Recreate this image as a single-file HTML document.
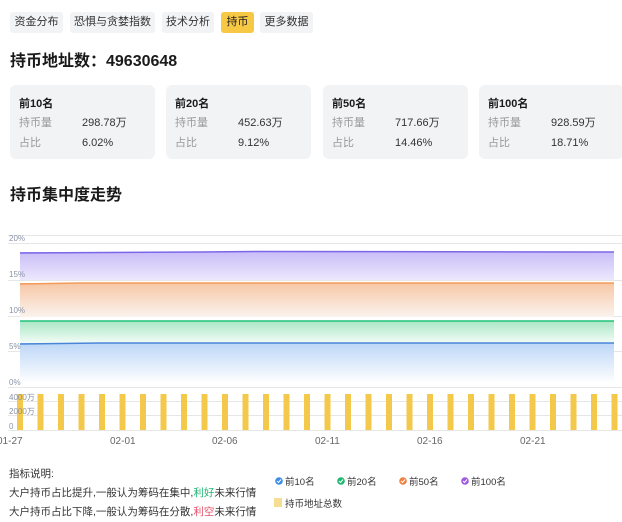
<!DOCTYPE html>
<html><head><meta charset="utf-8"><style>
*{margin:0;padding:0;box-sizing:border-box}
body{width:622px;height:522px;overflow:hidden;background:#fff;font-family:"Liberation Sans","Noto Sans CJK SC",sans-serif;color:#1a1a1a;position:relative}
.tab{position:absolute;top:12px;height:21px;background:#f2f3f5;border-radius:3px;font-size:11px;line-height:21px;text-align:center;color:#333}
.tab.on{background:#f7c843;color:#222}
.h{position:absolute;left:10px;font-size:16px;font-weight:bold}
.card{position:absolute;top:85px;width:145px;height:74px;background:#f2f3f5;border-radius:6px;font-size:11px}
.card b{position:absolute;left:9px;top:10px;font-size:11px}
.card .l{position:absolute;left:9px;color:#999;line-height:14px}
.card .v{position:absolute;left:72px;color:#333;line-height:14px}
.t{position:absolute;font-size:10.5px;color:#333}
</style></head><body>
<div class="tab" style="left:10px;width:53px">资金分布</div>
<div class="tab" style="left:70px;width:85px">恐惧与贪婪指数</div>
<div class="tab" style="left:162px;width:52px">技术分析</div>
<div class="tab on" style="left:221px;width:33px">持币</div>
<div class="tab" style="left:260px;width:53px">更多数据</div>
<div class="h" style="top:47px">持币地址数：49630648</div>
<div class="card" style="left:10px"><b>前10名</b><span class="l" style="top:31px">持币量</span><span class="v" style="top:31px">298.78万</span><span class="l" style="top:51px">占比</span><span class="v" style="top:51px">6.02%</span></div>
<div class="card" style="left:166px"><b>前20名</b><span class="l" style="top:31px">持币量</span><span class="v" style="top:31px">452.63万</span><span class="l" style="top:51px">占比</span><span class="v" style="top:51px">9.12%</span></div>
<div class="card" style="left:323px"><b>前50名</b><span class="l" style="top:31px">持币量</span><span class="v" style="top:31px">717.66万</span><span class="l" style="top:51px">占比</span><span class="v" style="top:51px">14.46%</span></div>
<div class="card" style="left:479px"><b>前100名</b><span class="l" style="top:31px">持币量</span><span class="v" style="top:31px">928.59万</span><span class="l" style="top:51px">占比</span><span class="v" style="top:51px">18.71%</span></div>
<div class="h" style="top:181px">持币集中度走势</div>
<svg style="position:absolute;left:0;top:0" width="622" height="522">
<defs>
<linearGradient id="gp" x1="0" y1="0" x2="0" y2="1"><stop offset="0" stop-color="#c9bdf7"/><stop offset="1" stop-color="#ece8fd"/></linearGradient>
<linearGradient id="go" x1="0" y1="0" x2="0" y2="1"><stop offset="0" stop-color="#f6c7a6"/><stop offset="1" stop-color="#fbf3ee"/></linearGradient>
<linearGradient id="gg" x1="0" y1="0" x2="0" y2="1"><stop offset="0" stop-color="#a9e7c5"/><stop offset="1" stop-color="#f3fcf7"/></linearGradient>
<linearGradient id="gb" x1="0" y1="0" x2="0" y2="1"><stop offset="0" stop-color="#bcd6f7"/><stop offset="1" stop-color="#ffffff"/></linearGradient>
</defs>
<g stroke="#e6e6e6" stroke-width="1">
<line x1="8" y1="235.5" x2="622" y2="235.5"/><line x1="8" y1="243.5" x2="622" y2="243.5"/>
<line x1="8" y1="280.5" x2="622" y2="280.5"/><line x1="8" y1="316.5" x2="622" y2="316.5"/>
<line x1="8" y1="351.5" x2="622" y2="351.5"/><line x1="8" y1="387.5" x2="622" y2="387.5"/>
<line x1="8" y1="401.5" x2="622" y2="401.5"/><line x1="8" y1="415.5" x2="622" y2="415.5"/><line x1="8" y1="430.5" x2="622" y2="430.5"/>
</g>
<rect x="20" y="252" width="594" height="28" fill="url(#gp)"/>
<rect x="20" y="283" width="594" height="34" fill="url(#go)"/>
<rect x="20" y="321" width="594" height="22" fill="url(#gg)"/>
<rect x="20" y="343" width="594" height="40" fill="url(#gb)"/>
<path d="M20 253 L200 252 L260 251.5 L614 252" stroke="#7b68e8" stroke-width="1.5" fill="none"/>
<path d="M20 284 L80 283 L614 283" stroke="#f39a5a" stroke-width="1.5" fill="none"/>
<path d="M20 321 L614 321" stroke="#22c27a" stroke-width="1.5" fill="none"/>
<path d="M20 344 L100 343 L614 343" stroke="#4a86d8" stroke-width="1.5" fill="none"/>
<g fill="#f4c84a" id="bars"></g>
<g font-size="8" fill="#8a94a6" font-family="Liberation Sans,Noto Sans CJK SC,sans-serif">
<text x="9" y="241">20%</text><text x="9" y="277">15%</text><text x="9" y="313">10%</text><text x="9" y="349">5%</text><text x="9" y="385">0%</text>
<text x="9" y="400">4000万</text><text x="9" y="414">2000万</text><text x="9" y="429">0</text>
</g>
<g font-size="10" fill="#666" font-family="Liberation Sans,sans-serif">
<text x="-3" y="444">01-27</text><text x="110" y="444">02-01</text><text x="212" y="444">02-06</text><text x="315" y="444">02-11</text><text x="417" y="444">02-16</text><text x="520" y="444">02-21</text>
</g>
<circle cx="279" cy="481" r="3.8" fill="#3a8ee6"/><circle cx="341" cy="481" r="3.8" fill="#1fb872"/><circle cx="403" cy="481" r="3.8" fill="#f08040"/><circle cx="465" cy="481" r="3.8" fill="#a05ae0"/>
<g stroke="#fff" stroke-width="1" fill="none"><path d="M277 481 L278.5 482.5 L281 479.5"/><path d="M339 481 L340.5 482.5 L343 479.5"/><path d="M401 481 L402.5 482.5 L405 479.5"/><path d="M463 481 L464.5 482.5 L467 479.5"/></g>
<rect x="274" y="498" width="8" height="9" fill="#f5dd92"/>
<g font-size="9.5" fill="#333" font-family="Liberation Sans,Noto Sans CJK SC,sans-serif">
<text x="285" y="485">前10名</text><text x="347" y="485">前20名</text><text x="409" y="485">前50名</text><text x="471" y="485">前100名</text><text x="285" y="507">持币地址总数</text>
</g>
</svg>
<div class="t" style="left:9px;top:466px">指标说明:</div>
<div class="t" style="left:9px;top:485px">大户持币占比提升,一般认为筹码在集中,<span style="color:#22b573">利好</span>未来行情</div>
<div class="t" style="left:9px;top:504px">大户持币占比下降,一般认为筹码在分散,<span style="color:#e8506a">利空</span>未来行情</div>
<script>
var g=document.getElementById('bars'),s='';
for(var i=0;i<30;i++){var x=17+i*20.5;s+='<rect x="'+x+'" y="394" width="6" height="36"/>';}
g.innerHTML=s;
</script>
</body></html>
